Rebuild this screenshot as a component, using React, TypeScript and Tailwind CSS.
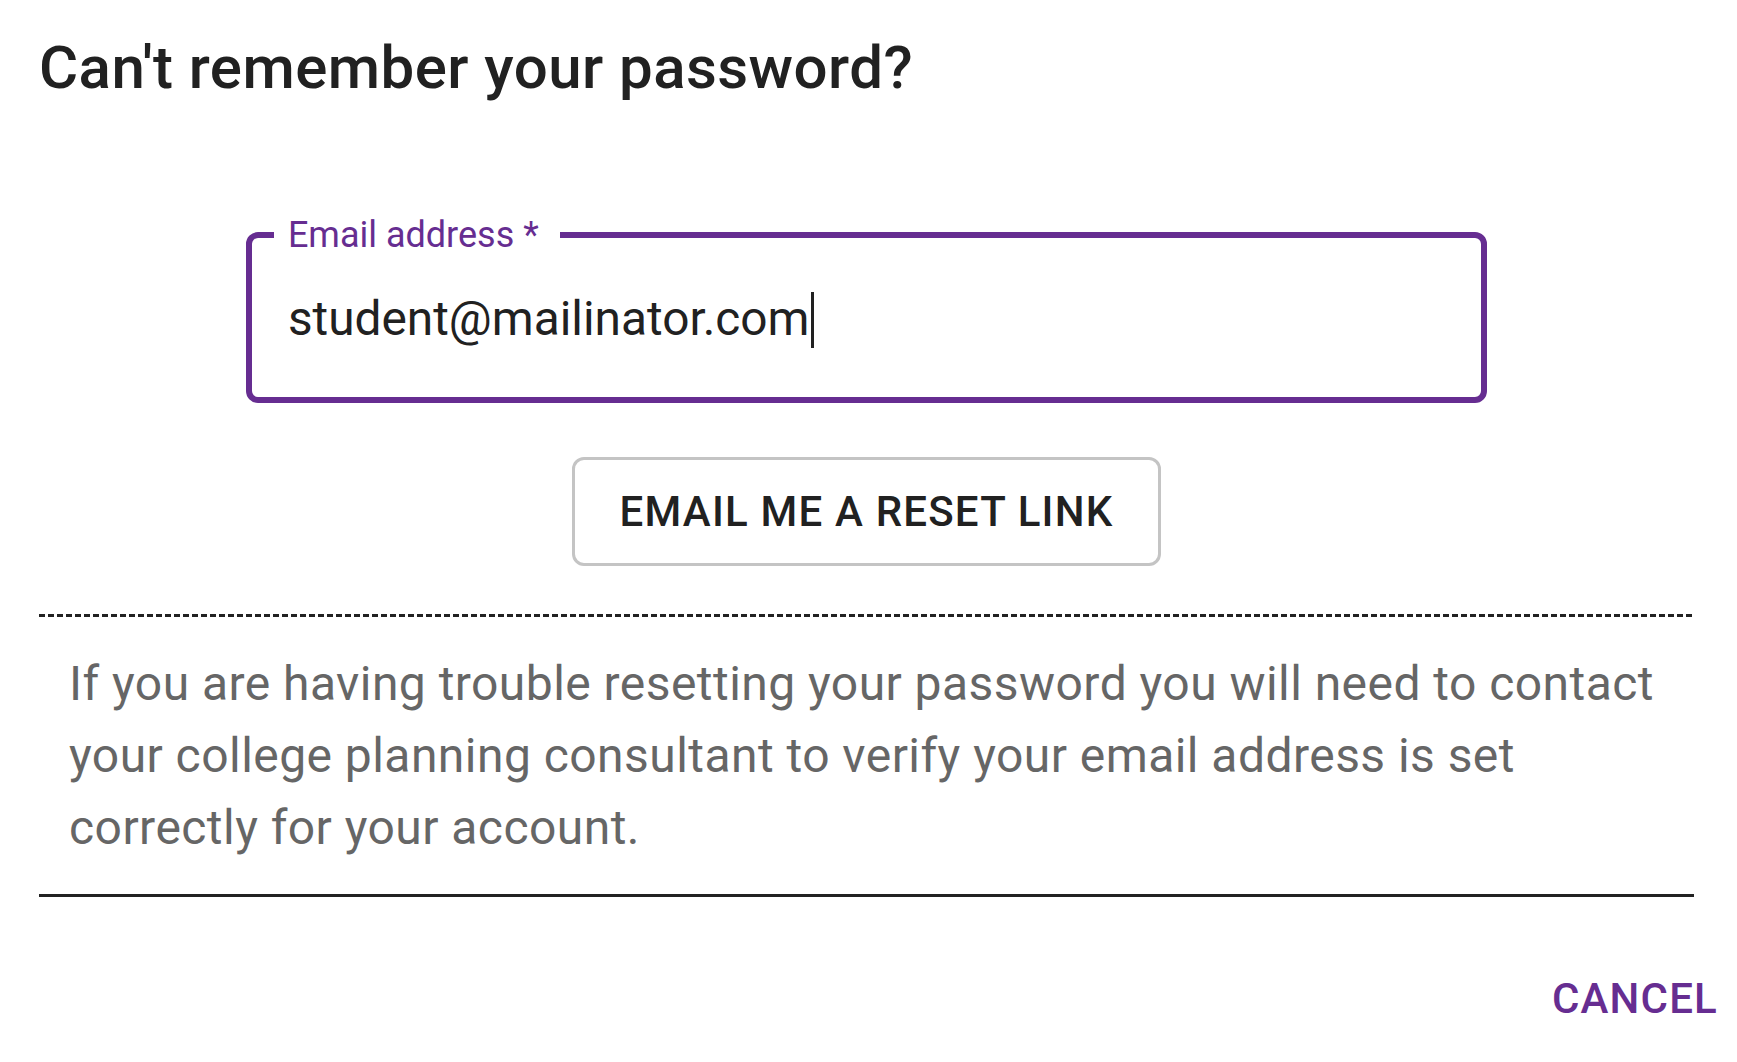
import React from 'react';

const ForgotPasswordDialog: React.FC = () => {
  return (
    <div className="min-h-screen bg-white font-['Roboto',sans-serif] text-[#212121]">
      <div className="pl-[39px] pr-[43px] pt-[20px]">
        <h2 className="text-[60px] font-medium leading-[96px] tracking-[0.0075em]">Can't remember your password?</h2>

        <div className="mt-[116px] mx-auto w-3/4">
          <div className="relative h-[171px] rounded-[12px] border-[6px] border-[#662d91]">
            <label className="absolute left-[22px] top-[-21px] bg-white pl-[14px] pr-[21px] text-[36px] leading-[36px] text-[#662d91]">
              Email address *
            </label>
            <div className="flex h-full items-center pl-[36px] pt-[4px] text-[47.8px]">
              <span>student@mailinator.com</span>
              <span className="ml-px inline-block h-[56px] w-[3px] bg-[#212121]" />
            </div>
          </div>
        </div>

        <div className="mt-[54px] flex justify-center">
          <button className="rounded-[12px] border-[3px] border-[#c4c4c4] px-[45px] py-[15px] text-[42px] font-medium uppercase leading-[73px] tracking-[0.02857em] text-[#212121]">
            Email me a reset link
          </button>
        </div>

        <div className="mt-[48px] h-[3px] bg-[repeating-linear-gradient(to_right,#222_0_6px,transparent_6px_9px)]" />
        <p className="px-[30px] pt-[31px] pb-[30px] text-[48px] leading-[72px] tracking-[0.00938em] text-[#666666]">
          If you are having trouble resetting your password you will need to contact your college planning consultant to verify your email address is set correctly for your account.
        </p>
        <div className="h-[3px] bg-[#222]" />
      </div>

      <div className="mt-[47px] flex justify-end">
        <button className="px-[19px] py-[18px] text-[42px] font-medium uppercase leading-[73px] tracking-[0.02857em] text-[#662d91]">
          Cancel
        </button>
      </div>
    </div>
  );
};

export default function App() {
  return <ForgotPasswordDialog />;
}
